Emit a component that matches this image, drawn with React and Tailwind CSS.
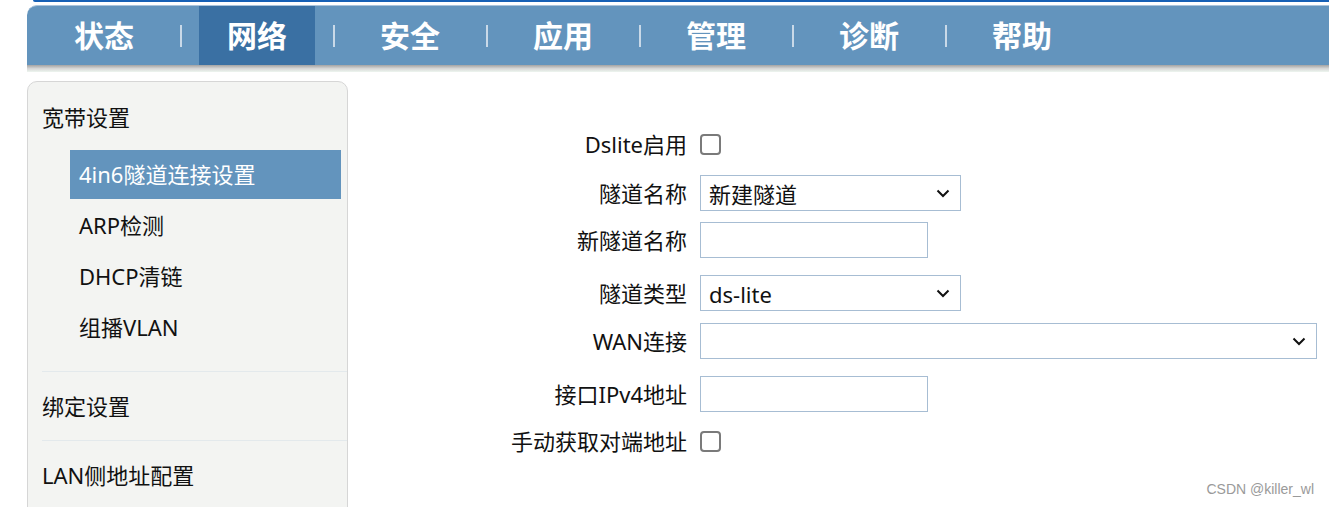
const tabs = ['状态', '网络', '安全', '应用', '管理', '诊断', '帮助'];

const subItems = ['4in6隧道连接设置', 'ARP检测', 'DHCP清链', '组播VLAN'];

function Chevron() {
  return (
    <svg width="16" height="10" viewBox="0 0 16 10" className="shrink-0">
      <path d="M2.5 2.5 L8 8 L13.5 2.5" fill="none" stroke="#111" strokeWidth="2" />
    </svg>
  );
}

function Checkbox() {
  return <div className="w-[21px] h-[21px] rounded-[4px] border-2 border-[#7a7a7a] bg-white" />;
}

function Select({ value, width }) {
  return (
    <div className={`${width} h-[36px] border border-[#a7bdd3] bg-white flex items-center justify-between pl-[8px] pr-[9px]`}>
      <span className="pt-[2px]">{value}</span>
      <Chevron />
    </div>
  );
}

function Input() {
  return <div className="w-[228px] h-[36px] border border-[#a7bdd3] bg-white" />;
}

function Row({ label, mt, children }) {
  return (
    <div className={`flex items-center ${mt}`}>
      <div className="w-[339px] text-right leading-none whitespace-nowrap">{label}</div>
      <div className="ml-[13px] flex-1 flex">{children}</div>
    </div>
  );
}

export default function App() {
  return (
    <div
      className="relative w-[1329px] h-[507px] overflow-hidden bg-white text-[#111]"
      style={{ fontFamily: '"Noto Sans", "Noto Sans CJK SC", sans-serif' }}
    >
      {/* header */}
      <div className="pl-[27px]">
        <div className="ml-[6px] h-[2px] bg-[#1660b5] rounded-bl-[2px]" />
        <div className="h-[3px] bg-white" />
        <div className="h-[60px] bg-[#6394bd] rounded-tl-[10px] border-t border-[#a9c3db] flex items-center pl-[19px]">
          {tabs.map((t, i) => (
            <div key={t} className="flex items-center h-full">
              {i > 0 && (
                <div className="w-[37px] flex justify-center">
                  <div className="w-[2px] h-[22px] bg-[#c9d9e8]" />
                </div>
              )}
              <div
                className={`w-[116px] h-full flex items-center justify-center text-white font-bold text-[30px] ${
                  i === 1 ? 'bg-[#3a70a3]' : ''
                }`}
              >
                {t}
              </div>
            </div>
          ))}
        </div>
        <div className="h-[7px] bg-gradient-to-b from-[#a3a3a3] via-[#d6d6d6] to-[#eef6f0]" />
      </div>

      <div className="flex mt-[9px]">
        {/* sidebar */}
        <div className="ml-[27px] w-[321px] h-[460px] bg-[#f3f4f2] border border-[#d6d6d6] rounded-t-[10px] text-[22px]">
          <div className="mt-[10px] h-[50px] flex items-center pl-[14px]">宽带设置</div>
          <div className="mt-[7px]">
            {subItems.map((s, i) => (
              <div key={s} className="h-[51px] flex items-center pl-[42px] pr-[6px]">
                <div
                  className={`w-full h-[49px] flex items-center pl-[9px] ${
                    i === 0 ? 'bg-[#6394bd] text-white' : ''
                  }`}
                >
                  {s}
                </div>
              </div>
            ))}
          </div>
          <div className="mt-[18px] ml-[14px] border-t border-[#e3e9ec] h-[69px] flex items-center">绑定设置</div>
          <div className="ml-[14px] border-t border-[#e3e9ec] h-[69px] flex items-center">LAN侧地址配置</div>
        </div>

        {/* form */}
        <div className="flex-1 pt-[52px] pr-[12px] text-[22px]">
          <Row label="Dslite启用" mt="mt-0">
            <Checkbox />
          </Row>
          <Row label="隧道名称" mt="mt-[20px]">
            <Select value="新建隧道" width="w-[261px]" />
          </Row>
          <Row label="新隧道名称" mt="mt-[11px]">
            <Input />
          </Row>
          <Row label="隧道类型" mt="mt-[17px]">
            <Select value="ds-lite" width="w-[261px]" />
          </Row>
          <Row label="WAN连接" mt="mt-[12px]">
            <Select value="" width="w-full" />
          </Row>
          <Row label="接口IPv4地址" mt="mt-[17px]">
            <Input />
          </Row>
          <Row label="手动获取对端地址" mt="mt-[18px]">
            <Checkbox />
          </Row>
        </div>
      </div>

      <div
        className="absolute right-[15px] bottom-[7px] text-[14px] text-[#9a9a9a]"
        style={{ fontFamily: '"Liberation Sans", sans-serif' }}
      >
        CSDN @killer_wl
      </div>
    </div>
  );
}
